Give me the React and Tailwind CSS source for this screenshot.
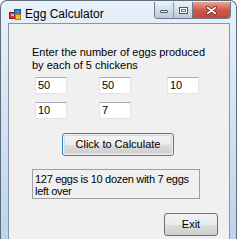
import React from 'react'

const font = { fontFamily: '"Liberation Sans", Arial, sans-serif' }

function AppIcon() {
  return (
    <svg width="12" height="11" viewBox="0 0 12 11">
      <rect x="0.5" y="3.5" width="6" height="6" fill="#d8362b" stroke="#8a1d15" />
      <rect x="5.5" y="0.5" width="6" height="5" fill="#3b7fd4" stroke="#1d4f8f" />
      <rect x="6.5" y="5.5" width="5" height="5" fill="#f2c12e" stroke="#a57f10" />
      <rect x="2" y="5" width="3" height="2" fill="#f6a49e" />
    </svg>
  )
}

function TextBox({ value, className = '' }) {
  return (
    <div
      className={`w-[32px] h-[17px] bg-white border border-[#e2e3ea] border-t-[#abadb3] text-[11px] leading-[15px] pl-[2px] text-black ${className}`}
    >
      {value}
    </div>
  )
}

export default function App() {
  return (
    <div className="w-[237px] h-[239px] overflow-hidden bg-white" style={font}>
      <div className="w-[237px] h-[239px] rounded-t-[7px] border border-[#5e6b78] border-b-0 bg-gradient-to-b from-[#e8f1fa] via-[#d3e3f4] to-[#bcd4ec] flex flex-col">
        {/* title bar */}
        <div className="h-[22px] flex items-start relative">
          <div className="mt-[8px] ml-[8px]">
            <AppIcon />
          </div>
          <div className="ml-[4px] mt-[6px] text-[12px] leading-[14px] text-black">Egg Calculator</div>
          <div className="absolute right-[5px] top-[1px] flex h-[17px] rounded-b-[4px] overflow-hidden border border-t-0 border-[#6d7a89]">
            <div className="w-[19px] h-full bg-gradient-to-b from-[#e9f0f8] via-[#d3dfec] to-[#b8c8da] border-r border-[#8e9dae] flex items-center justify-center">
              <div className="w-[8px] h-[3px] mt-[3px] bg-white border border-[#4b5663] rounded-[1px]" />
            </div>
            <div className="w-[19px] h-full bg-gradient-to-b from-[#e9f0f8] via-[#d3dfec] to-[#b8c8da] border-r border-[#6d7a89] flex items-center justify-center">
              <div className="w-[9px] h-[7px] border border-[#4b5663] bg-white flex items-center justify-center">
                <div className="w-[5px] h-[3px] border border-[#6c7784]" />
              </div>
            </div>
            <div className="w-[37px] h-full bg-gradient-to-b from-[#e8a496] via-[#d0584a] to-[#c2473a] flex items-center justify-center">
              <svg width="11" height="9" viewBox="0 0 11 9">
                <path d="M1.5 1.5 L9.5 7.5 M9.5 1.5 L1.5 7.5" stroke="#5a1a14" strokeWidth="3" strokeLinecap="round" />
                <path d="M1.5 1.5 L9.5 7.5 M9.5 1.5 L1.5 7.5" stroke="#ffffff" strokeWidth="1.6" strokeLinecap="round" />
              </svg>
            </div>
          </div>
        </div>

        {/* client area */}
        <div className="flex-1 ml-[7px] mr-[6px] border border-b-0 border-[#8795a5] bg-[#f0f0f0] text-black">
          <div className="pl-[23px] pt-[22px] text-[11px] leading-[13px] whitespace-nowrap">
            Enter the number of eggs produced
            <br />
            by each of 5 chickens
          </div>
          <div className="flex pl-[26px] mt-[5px]">
            <TextBox value="50" />
            <TextBox value="50" className="ml-[32px]" />
            <TextBox value="10" className="ml-[36px]" />
          </div>
          <div className="flex pl-[26px] mt-[8px]">
            <TextBox value="10" />
            <TextBox value="7" className="ml-[32px]" />
          </div>
          <div className="pl-[53px] mt-[14px]">
            <div className="w-[112px] h-[23px] rounded-[3px] border border-[#3c7fb1] p-[1px]">
              <div className="w-full h-full rounded-[2px] border border-[#bfe3f7] bg-[linear-gradient(to_bottom,#f2f2f2_0%,#ebebeb_50%,#dddddd_51%,#cfcfcf_100%)] flex items-center justify-center text-[11px] leading-none">
                Click to Calculate
              </div>
            </div>
          </div>
          <div className="ml-[23px] mt-[13px] w-[168px] h-[30px] border border-[#a0a0a0] text-[11px] leading-[12px] pl-[2px] pt-[3px] whitespace-nowrap tracking-[-0.3px]">
            127 eggs is 10 dozen with 7 eggs
            <br />
            left over
          </div>
          <div className="ml-[155px] mt-[14px] w-[54px] h-[23px] rounded-[3px] border border-[#707070] bg-[linear-gradient(to_bottom,#f2f2f2_0%,#ebebeb_50%,#dddddd_51%,#cfcfcf_100%)] flex items-center justify-center text-[11px] leading-none">
            Exit
          </div>
        </div>
      </div>
    </div>
  )
}
